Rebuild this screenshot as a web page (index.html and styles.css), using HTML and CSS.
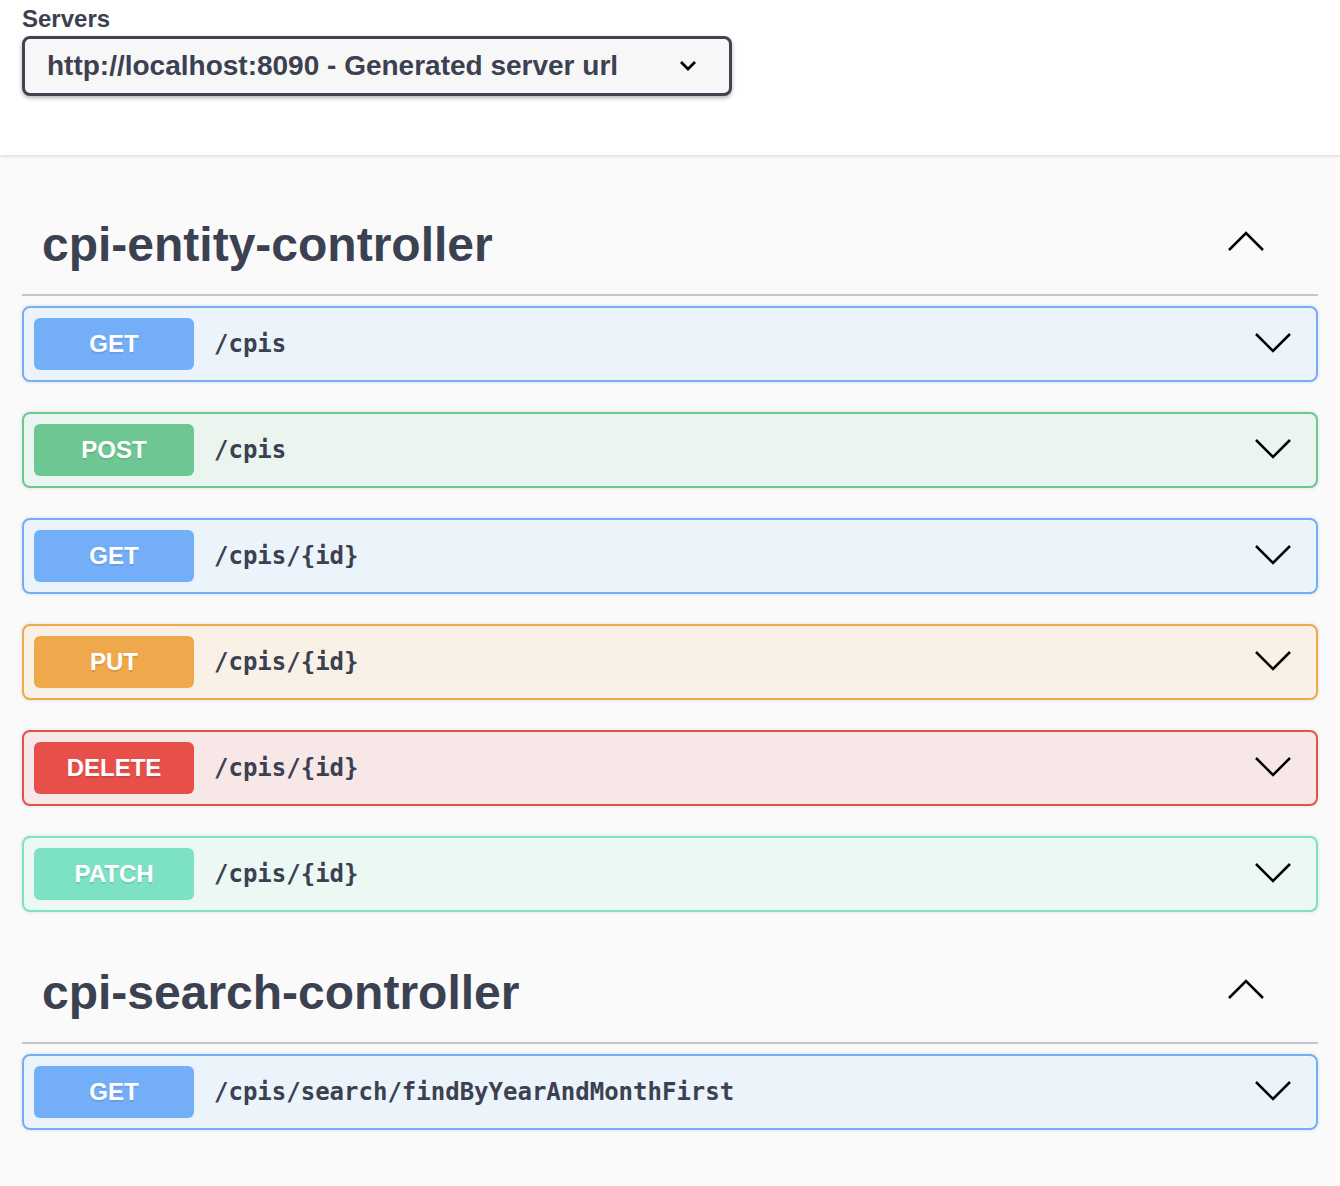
FILE: index.html
```html
<!DOCTYPE html>
<html lang="en">
<head>
<meta charset="utf-8">
<title>Swagger UI</title>
<link rel="stylesheet" href="styles.css">
</head>
<body>
<div class="scheme">
  <label class="servers-label">Servers</label>
  <div class="select">
    <span class="select-text">http://localhost:8090 - Generated server url</span>
    <svg class="select-arrow" width="18" height="12" viewBox="0 0 18 12"><path d="M2 2 L9 9 L16 2" fill="none" stroke="#000" stroke-width="2.8"/></svg>
  </div>
</div>
<main class="content">
  <section class="tag-section">
    <h3 class="tag">
      <span>cpi-entity-controller</span>
      <svg class="tag-arrow" width="38" height="22" viewBox="0 0 38 22"><path d="M2 20 L19 3 L36 20" fill="none" stroke="#000" stroke-width="2.5"/></svg>
    </h3>
    <div class="opblock get">
      <span class="method">GET</span><span class="path">/cpis</span>
      <svg class="op-arrow" width="38" height="22" viewBox="0 0 38 22"><path d="M2 3 L19 20 L36 3" fill="none" stroke="#000" stroke-width="2.5"/></svg>
    </div>
    <div class="opblock post">
      <span class="method">POST</span><span class="path">/cpis</span>
      <svg class="op-arrow" width="38" height="22" viewBox="0 0 38 22"><path d="M2 3 L19 20 L36 3" fill="none" stroke="#000" stroke-width="2.5"/></svg>
    </div>
    <div class="opblock get">
      <span class="method">GET</span><span class="path">/cpis/{id}</span>
      <svg class="op-arrow" width="38" height="22" viewBox="0 0 38 22"><path d="M2 3 L19 20 L36 3" fill="none" stroke="#000" stroke-width="2.5"/></svg>
    </div>
    <div class="opblock put">
      <span class="method">PUT</span><span class="path">/cpis/{id}</span>
      <svg class="op-arrow" width="38" height="22" viewBox="0 0 38 22"><path d="M2 3 L19 20 L36 3" fill="none" stroke="#000" stroke-width="2.5"/></svg>
    </div>
    <div class="opblock delete">
      <span class="method">DELETE</span><span class="path">/cpis/{id}</span>
      <svg class="op-arrow" width="38" height="22" viewBox="0 0 38 22"><path d="M2 3 L19 20 L36 3" fill="none" stroke="#000" stroke-width="2.5"/></svg>
    </div>
    <div class="opblock patch">
      <span class="method">PATCH</span><span class="path">/cpis/{id}</span>
      <svg class="op-arrow" width="38" height="22" viewBox="0 0 38 22"><path d="M2 3 L19 20 L36 3" fill="none" stroke="#000" stroke-width="2.5"/></svg>
    </div>
  </section>
  <section class="tag-section">
    <h3 class="tag">
      <span>cpi-search-controller</span>
      <svg class="tag-arrow" width="38" height="22" viewBox="0 0 38 22"><path d="M2 20 L19 3 L36 20" fill="none" stroke="#000" stroke-width="2.5"/></svg>
    </h3>
    <div class="opblock get">
      <span class="method">GET</span><span class="path">/cpis/search/findByYearAndMonthFirst</span>
      <svg class="op-arrow" width="38" height="22" viewBox="0 0 38 22"><path d="M2 3 L19 20 L36 3" fill="none" stroke="#000" stroke-width="2.5"/></svg>
    </div>
  </section>
</main>
</body>
</html>
```
FILE: styles.css
```css
html, body {
  margin: 0;
  padding: 0;
}
body {
  background: #fafafa;
  font-family: "Liberation Sans", Arial, sans-serif;
  color: #3b4151;
}
.scheme {
  background: #fff;
  height: 155px;
  box-sizing: border-box;
  padding: 5px 22px 0;
  box-shadow: 0 1px 4px rgba(0, 0, 0, 0.15);
  position: relative;
}
.servers-label {
  display: block;
  font-size: 24px;
  line-height: 28px;
  font-weight: 700;
  color: #3b4151;
  height: 31px;
}
.select {
  width: 710px;
  height: 60px;
  box-sizing: border-box;
  border: 3px solid #41444e;
  border-radius: 8px;
  background: #f7f7f7;
  box-shadow: 0 2px 4px rgba(0, 0, 0, 0.3);
  display: flex;
  align-items: center;
  padding: 0 0 0 22px;
}
.select-text {
  font-size: 28px;
  font-weight: 700;
  color: #3b4151;
  width: 632px;
}
.select-arrow {
  display: block;
}
.content {
  padding: 39px 22px 40px;
}
.tag {
  margin: 0 0 10px;
  height: 102px;
  box-sizing: border-box;
  border-bottom: 2px solid #c4c5c9;
  padding: 0 55px 0 20px;
  display: flex;
  align-items: center;
  justify-content: space-between;
  font-size: 48px;
  font-weight: 700;
  color: #3b4151;
}
.tag-arrow {
  display: block;
  margin-top: -6px;
  margin-right: -2px;
}
.opblock {
  height: 76px;
  box-sizing: border-box;
  border: 2px solid;
  border-radius: 8px;
  margin-bottom: 30px;
  padding: 0 24px 0 10px;
  display: flex;
  align-items: center;
  box-shadow: 0 0 4px rgba(0, 0, 0, 0.12);
}
.method {
  width: 160px;
  height: 52px;
  border-radius: 6px;
  display: flex;
  align-items: center;
  justify-content: center;
  color: #fff;
  font-size: 24px;
  font-weight: 700;
  text-shadow: 0 2px 0 rgba(0, 0, 0, 0.1);
}
.path {
  flex: 1;
  padding-left: 20px;
  font-family: "DejaVu Sans Mono", "Liberation Mono", monospace;
  font-size: 24px;
  font-weight: 700;
  color: #3b4151;
}
.op-arrow {
  display: block;
  margin-top: -4px;
}
.get { background: #ebf3fb; border-color: #74aef8; }
.get .method { background: #74aef8; }
.post { background: #e9f5ee; border-color: #6ec692; }
.post .method { background: #6ec692; }
.put { background: #f9f0e6; border-color: #efa84b; }
.put .method { background: #efa84b; }
.delete { background: #f8e7e7; border-color: #e64f4a; }
.delete .method { background: #e64f4a; }
.patch { background: #ebf8f4; border-color: #7de1c4; }
.patch .method { background: #7de1c4; }
```
